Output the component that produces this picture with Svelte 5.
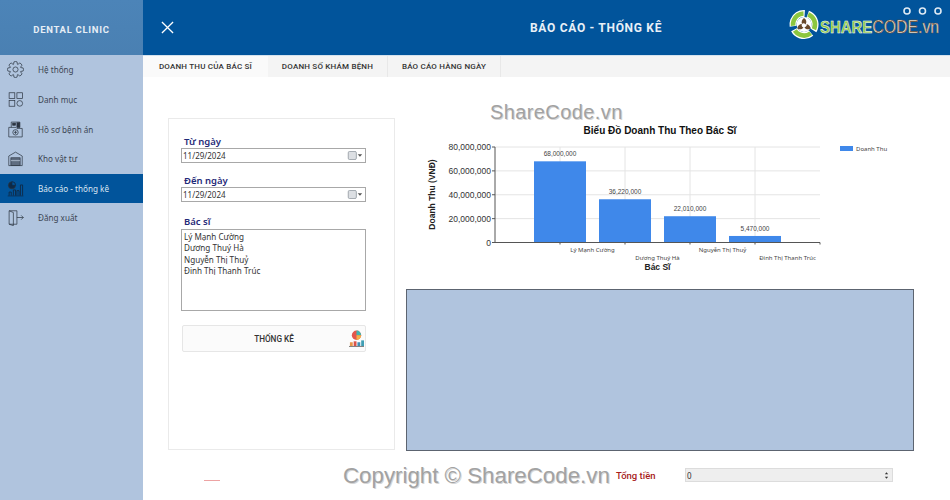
<script lang="ts">
	const menu = [
		{ label: 'Hệ thống', icon: 'gear' },
		{ label: 'Danh mục', icon: 'grid' },
		{ label: 'Hồ sơ bệnh án', icon: 'file' },
		{ label: 'Kho vật tư', icon: 'store' },
		{ label: 'Báo cáo - thống kê', icon: 'report', active: true },
		{ label: 'Đăng xuất', icon: 'exit' }
	];
	const tabs = ['DOANH THU CỦA BÁC SĨ', 'DOANH SỐ KHÁM BỆNH', 'BÁO CÁO HÀNG NGÀY'];
	const doctors = ['Lý Mạnh Cường', 'Dương Thuý Hà', 'Nguyễn Thị Thuỷ', 'Đinh Thị Thanh Trúc'];

	// chart geometry, in svg coordinates (svg starts at 420,95 of the page)
	const axisLeft = 75;
	const axisRight = 400;
	const axisTop = 52;
	const axisBottom = 147.5;
	const yFor = (v: number) => axisBottom - (v / 80000000) * (axisBottom - axisTop);
	const ticks = [0, 20000000, 40000000, 60000000, 80000000];
	const bars = [
		{ x: 114, value: 68000000, text: '68,000,000', name: 'Lý Mạnh Cường', nameX: 172.5, nameY: 156.5 },
		{ x: 179, value: 36220000, text: '36,220,000', name: 'Dương Thuý Hà', nameX: 237.5, nameY: 165 },
		{ x: 244, value: 22010000, text: '22,010,000', name: 'Nguyễn Thị Thuỷ', nameX: 302.5, nameY: 156.5 },
		{ x: 309, value: 5470000, text: '5,470,000', name: 'Đinh Thị Thanh Trúc', nameX: 367.5, nameY: 165 }
	];
	const grid = [140, 205, 270, 335];

	// 8-lobed gear outline for the first menu item
	function gearPath() {
		const pts: string[] = [];
		for (let i = 0; i < 8; i++) {
			const a = (i / 8) * Math.PI * 2;
			const p = (r: number, d: number) => {
				const t = a + d;
				return `${(12 + r * Math.cos(t)).toFixed(2)} ${(12 + r * Math.sin(t)).toFixed(2)}`;
			};
			pts.push(`${i === 0 ? 'M' : 'L'}${p(7.8, -0.36)} L${p(11, -0.2)} Q${p(11.8, 0)} ${p(11, 0.2)} L${p(7.8, 0.36)}`);
		}
		return pts.join(' ') + 'Z';
	}
</script>

<div class="app">
	<aside class="sidebar">
		<div class="brand">DENTAL CLINIC</div>
		<nav class="menu">
			{#each menu as item}
				<div class="item" class:active={item.active}>
					<svg class="icon" viewBox="0 0 24 24" fill="none" stroke="#2b3440" stroke-width="1">
						{#if item.icon === 'gear'}
							<circle cx="12" cy="12" r="3.6" />
							<path d={gearPath()} stroke-linejoin="round" />
						{:else if item.icon === 'grid'}
							<rect x="3" y="2.500" width="8" height="8" />
							<rect x="14" y="2.500" width="8" height="8" />
							<rect x="3" y="13.500" width="8" height="8" />
							<rect x="14" y="13.500" width="8" height="8" rx="4" />
						{:else if item.icon === 'file'}
							<path d="M6 9V1.500h12V9" />
							<rect x="8" y="3" width="4" height="3" fill="#2b3440" />
							<rect x="14" y="2.500" width="4" height="6.500" fill="#2b3440" />
							<path d="M2.500 9h10l1.500 1.500h7.500v12h-19z" />
							<circle cx="12" cy="16" r="3.800" />
							<path d="M12 13.800v4.400M9.800 16h4.400" />
						{:else if item.icon === 'store'}
							<path d="M2.500 8.500 12 3l9.500 5.500v13.500h-19z" />
							<rect x="5.500" y="11" width="13" height="11" fill="#5f6d80" stroke="#2b3440" />
							<path d="M5.500 15h13" stroke="#c5d2e2" />
						{:else if item.icon === 'report'}
							<circle cx="7" cy="7.500" r="5" fill="#0f2a47" />
							<path d="M7 7.500v-5a5 5 0 0 1 5 5z" fill="#01549b" stroke="#0f2a47" />
							<path d="M3 22v-5h3v5M9 22v-8h3v8M14 22v-7h3v7M19 22V7h3v15" stroke="#0f2a47" stroke-width="1.300" />
							<path d="M1 22.500h22" stroke="#0f2a47" />
						{:else}
							<path d="M3 2.500h11v19H3z" />
							<path d="M3 2.500l6 2.500v18.500L3 21.500" />
							<path d="M14 12h9M20 9l3 3-3 3" />
						{/if}
					</svg>
					<span>{item.label}</span>
				</div>
			{/each}
		</nav>
	</aside>

	<div class="main">
		<header class="topbar">
			<svg class="close" viewBox="0 0 14 14" stroke="#fff" stroke-width="1.4"><path d="M1 1l12 12M13 1 1 13" /></svg>
			<h1>BÁO CÁO - THỐNG KÊ</h1>
			<svg class="logo" viewBox="0 0 160 44">
				<g fill="none" stroke="#dfeaf4" stroke-width="1.600">
					<circle cx="122" cy="7" r="3" />
					<circle cx="137.500" cy="7" r="3" />
					<circle cx="153" cy="7" r="3" />
				</g>
				<circle cx="19" cy="20.500" r="11" fill="none" stroke="#fff" stroke-width="7" stroke-dasharray="19.500 3.500" transform="rotate(-70 19 20.500)" />
				<circle cx="19" cy="20.500" r="11" fill="none" stroke="#8cc63f" stroke-width="4.600" stroke-dasharray="18 5" transform="rotate(-68 19 20.500)" />
				<circle cx="19" cy="20.500" r="7.500" fill="#fff" />
				<path d="M19 14c2.500 1.500 3 4 1.500 6.500-1-1.500-2.500-1.500-3.500-.5-1-2 0-4.500 2-6zM12.500 24.500c0-3 2-4.500 4.500-4.500-.8 1.500 0 3 1.500 3.500-1.500 2-4 2.500-6 1zM25.500 24.500c-2 1.500-5 1-6-1.200 1.800-.3 2.600-1.800 2.200-3.300 2.300.8 3.800 2.300 3.800 4.500z" fill="#6b4a2b" />
				<text transform="translate(35 29) scale(0.88 1)"><tspan class="logo-a">SHARE</tspan><tspan class="logo-b">CODE</tspan><tspan class="logo-c">.vn</tspan></text>
			</svg>
		</header>

		<div class="tabs">
			{#each tabs as tab, i}
				<div class="tab" class:current={i === 0}>{tab}</div>
			{/each}
		</div>

		<div class="content">
			<section class="filters">
				<label for="from">Từ ngày</label>
				<div class="date" id="from">
					<span>11/29/2024</span>
					<svg class="cal" viewBox="0 0 16 10"><rect x="0.500" y="0.500" width="9" height="9" rx="1.500" fill="#dcdfe3" stroke="#9aa0a8" /><path d="M11 3.500h5l-2.500 3z" fill="#555" /></svg>
				</div>
				<label for="to" class="second">Đến ngày</label>
				<div class="date" id="to">
					<span>11/29/2024</span>
					<svg class="cal" viewBox="0 0 16 10"><rect x="0.500" y="0.500" width="9" height="9" rx="1.500" fill="#dcdfe3" stroke="#9aa0a8" /><path d="M11 3.500h5l-2.500 3z" fill="#555" /></svg>
				</div>
				<label for="doc" class="third">Bác sĩ</label>
				<div class="list" id="doc">
					{#each doctors as d}<div>{d}</div>{/each}
				</div>
				<button class="run">
					THỐNG KÊ
					<svg class="pie" viewBox="0 0 16 18">
						<circle cx="8" cy="5.500" r="5" fill="#e2574c" />
						<path d="M8 5.500V.5a5 5 0 0 1 5 5z" fill="#3fb5b0" />
						<path d="M8 5.500h5a5 5 0 0 1-5 5z" fill="#f3b14a" />
						<rect x="1" y="13" width="3" height="4" fill="#e8964a" />
						<rect x="5" y="12" width="3" height="5" fill="#d9534a" />
						<rect x="9" y="13" width="3" height="4" fill="#3f8fb5" />
						<rect x="13" y="11" width="3" height="6" fill="#3f9fb5" />
						<path d="M0 17.500h16" stroke="#555" stroke-width="0.800" />
					</svg>
				</button>
			</section>

			<section class="right">
				<svg class="chart" viewBox="0 0 480 190">
					<text x="240" y="39" class="title" text-anchor="middle">Biểu Đồ Doanh Thu Theo Bác Sĩ</text>
					{#each ticks as t}
						<line x1={axisLeft} x2={axisRight} y1={yFor(t)} y2={yFor(t)} stroke="#e4e4e4" />
						<line x1={axisLeft - 3} x2={axisLeft} y1={yFor(t)} y2={yFor(t)} stroke="#555" />
						<text x={axisLeft - 4} y={yFor(t) + 3} class="tick" text-anchor="end">{t.toLocaleString('en-US')}</text>
					{/each}
					{#each grid as g}
						<line x1={g} x2={g} y1={axisTop} y2={axisBottom} stroke="#e4e4e4" />
						<line x1={g} x2={g} y1={axisBottom} y2={axisBottom + 2} stroke="#555" />
					{/each}
					{#each bars as b}
						<rect x={b.x} y={yFor(b.value)} width="52" height={axisBottom - yFor(b.value)} fill="#3f88ea" />
						<text x={b.x + 26} y={yFor(b.value) - 5} class="value" text-anchor="middle">{b.text}</text>
						<text x={b.nameX} y={b.nameY} class="name" text-anchor="middle">{b.name}</text>
					{/each}
					<line x1={axisLeft} x2={axisRight} y1={axisBottom} y2={axisBottom} stroke="#555" />
					<line x1={axisLeft} x2={axisLeft} y1={axisTop} y2={axisBottom} stroke="#555" />
					<line x1={axisRight} x2={axisRight} y1={axisBottom} y2={axisBottom + 2} stroke="#555" />
					<text x="237.500" y="175" class="axis" text-anchor="middle">Bác Sĩ</text>
					<text transform="translate(15 99.500) rotate(-90)" class="axis" text-anchor="middle">Doanh Thu (VNĐ)</text>
					<rect x="420" y="51" width="13" height="5" fill="#3f88ea" />
					<text x="436" y="56" class="name">Doanh Thu</text>
				</svg>
				<div class="panel"></div>
			</section>
		</div>

		<footer class="total">
			<span class="dash"></span>
			<span class="total-label">Tổng tiền</span>
			<div class="spin">
				<span>0</span>
				<svg viewBox="0 0 6 10" class="arrows"><path d="M3 1l2 2.500H1zM3 9 1 6.500h4z" fill="#333" /></svg>
			</div>
		</footer>

		<div class="mark mark-top">ShareCode.vn</div>
		<div class="mark mark-bottom">Copyright © ShareCode.vn</div>
	</div>
</div>

<style>
	:global(body) {
		margin: 0;
	}

	.app {
		display: flex;
		width: 950px;
		height: 500px;
		overflow: hidden;
		font-family: 'Noto Sans', 'Liberation Sans', sans-serif;
		background: #fff;
	}

	.sidebar {
		width: 143px;
		flex: none;
		background: #b0c4de;
		display: flex;
		flex-direction: column;
	}

	.brand {
		height: 55px;
		display: flex;
		align-items: center;
		justify-content: center;
		padding-top: 3px;
		box-sizing: border-box;
		background: linear-gradient(180deg, #4c84b8, #4a80b2);
		color: #e6eef6;
		font-family: Roboto, sans-serif;
		font-size: 9.500px;
		font-weight: 700;
		letter-spacing: 0.7px;
	}

	.menu {
		display: flex;
		flex-direction: column;
	}

	.item {
		height: 29.700px;
		display: flex;
		align-items: center;
		gap: 14px;
		padding-left: 7px;
		font-size: 8.150px;
		color: #3c4654;
	}

	.item.active {
		background: #01549b;
		color: #dbe6f2;
		height: 29px;
	}

	.item:last-child {
		height: 29px;
	}

	.icon {
		width: 17px;
		height: 17px;
		flex: none;
	}

	.main {
		flex: 1;
		position: relative;
		display: flex;
		flex-direction: column;
		min-width: 0;
	}

	.topbar {
		height: 55px;
		flex: none;
		background: #01549b;
		display: flex;
		align-items: center;
		position: relative;
		box-sizing: border-box;
		padding-left: 18px;
	}

	.close {
		width: 13px;
		height: 13px;
	}

	h1 {
		margin: 0;
		position: absolute;
		left: 387px;
		top: 21px;
		font-family: Roboto, sans-serif;
		font-size: 12px;
		line-height: 15px;
		font-weight: 700;
		color: #e9f0f7;
		letter-spacing: 0.7px;
	}

	.logo {
		position: absolute;
		left: 642px;
		top: 4px;
		width: 160px;
		height: 44px;
	}

	.logo-a {
		font: 900 17px 'Liberation Sans', sans-serif;
		fill: #8cc63f;
		stroke: #fff;
		stroke-width: 0.500px;
	}

	.logo-b {
		font: 400 18px 'Liberation Sans', sans-serif;
		fill: #f4efe6;
		stroke: #6b4a2b;
		stroke-width: 0.600px;
	}

	.logo-c {
		font: 400 18px 'Liberation Sans', sans-serif;
		fill: #f4efe6;
		stroke: #6b4a2b;
		stroke-width: 0.500px;
	}

	.tabs {
		height: 22px;
		flex: none;
		display: flex;
		background: #f4f4f4;
		border-top: 1px solid #d4e2ee;
		box-sizing: border-box;
	}

	.tab {
		display: flex;
		align-items: center;
		justify-content: center;
		box-sizing: border-box;
		border-right: 1px solid #e8e8e8;
		font-family: Roboto, sans-serif;
		font-size: 8px;
		font-weight: 500;
		letter-spacing: 0.2px;
		color: #333;
		width: 120px;
	}

	.tab:nth-child(3) {
		width: 113px;
	}

	.tab.current {
		width: 125px;
		background: #fafafa;
		border-right: none;
	}

	.content {
		flex: 1;
		display: flex;
		gap: 11px;
		padding: 41px 36px 0 25px;
		min-height: 0;
	}

	.filters {
		width: 227px;
		height: 332px;
		flex: none;
		box-sizing: border-box;
		border: 1px solid #eaeaea;
		padding: 16px 28px 0 12px;
		display: flex;
		flex-direction: column;
	}

	label {
		display: block;
		padding-left: 3px;
		font-size: 9.500px;
		line-height: 13px;
		font-weight: 600;
		color: #1f2a78;
	}

	label.second {
		margin-top: 11px;
	}

	label.third {
		margin-top: 13px;
	}

	.date {
		height: 15px;
		flex: none;
		box-sizing: border-box;
		border: 1px solid #a8a8a8;
		display: flex;
		align-items: center;
		justify-content: space-between;
		padding: 0 2px 0 1px;
		font-size: 8px;
		color: #333;
	}

	.cal {
		width: 16px;
		height: 9px;
	}

	.list {
		margin-top: 1px;
		height: 82px;
		flex: none;
		box-sizing: border-box;
		border: 1px solid #a8a8a8;
		padding: 1px 2px;
		font-size: 8.100px;
		line-height: 11.400px;
		color: #333;
	}

	.run {
		margin: 14px 0 0 1px;
		height: 27px;
		flex: none;
		box-sizing: border-box;
		border: 1px solid #e6e6e6;
		border-radius: 2px;
		background: #fbfbfb;
		position: relative;
		font-family: Roboto, sans-serif;
		font-size: 8.200px;
		font-weight: 500;
		color: #333;
		padding: 0;
		width: 184px;
	}

	.pie {
		position: absolute;
		right: 1px;
		top: 4px;
		width: 15px;
		height: 17px;
	}

	.right {
		flex: 1;
		min-width: 0;
		display: flex;
		flex-direction: column;
	}

	.chart {
		width: 480px;
		height: 190px;
		margin: -23px 0 0 14px;
		flex: none;
	}

	.title {
		font: 700 10px 'Liberation Sans', sans-serif;
		fill: #111;
	}

	.tick {
		font: 400 8.500px 'Liberation Sans', sans-serif;
		fill: #333;
	}

	.value {
		font: 400 6.500px 'Liberation Sans', sans-serif;
		fill: #444;
	}

	.name {
		font: 400 6px 'Noto Sans', sans-serif;
		fill: #444;
	}

	.axis {
		font: 700 8.500px 'Liberation Sans', sans-serif;
		fill: #222;
	}

	.panel {
		margin-top: 4px;
		height: 162px;
		width: 508px;
		box-sizing: border-box;
		background: #b0c4de;
		border: 1px solid #5c6470;
		flex: none;
	}

	.total {
		height: 49px;
		flex: none;
		display: flex;
		align-items: center;
		padding-left: 61px;
		padding-bottom: 1px;
		box-sizing: border-box;
	}

	.dash {
		align-self: flex-start;
		width: 16px;
		height: 1px;
		background: #eda3a3;
		margin-top: 29px;
	}

	.total-label {
		margin-left: 396px;
		font-family: Roboto, sans-serif;
		font-size: 9.500px;
		font-weight: 500;
		color: #a81c1c;
		width: 69px;
		flex: none;
	}

	.spin {
		width: 208px;
		height: 14px;
		box-sizing: border-box;
		background: #eeeeee;
		border: 1px solid #dcdcdc;
		display: flex;
		align-items: center;
		justify-content: space-between;
		padding: 0 3px 0 1px;
		font-size: 8px;
		color: #333;
	}

	.arrows {
		width: 5px;
		height: 9px;
	}

	.mark {
		position: absolute;
		font-family: 'Liberation Sans', sans-serif;
		color: #a2a2a2;
		text-shadow: 1px 1px 0 #d6d6d6;
		white-space: nowrap;
		pointer-events: none;
	}

	.mark-top {
		left: 347px;
		top: 100px;
		font-size: 20px;
		line-height: 24px;
		letter-spacing: 0.4px;
	}

	.mark-bottom {
		left: 200px;
		top: 464px;
		font-size: 22.300px;
		line-height: 24px;
	}
</style>
